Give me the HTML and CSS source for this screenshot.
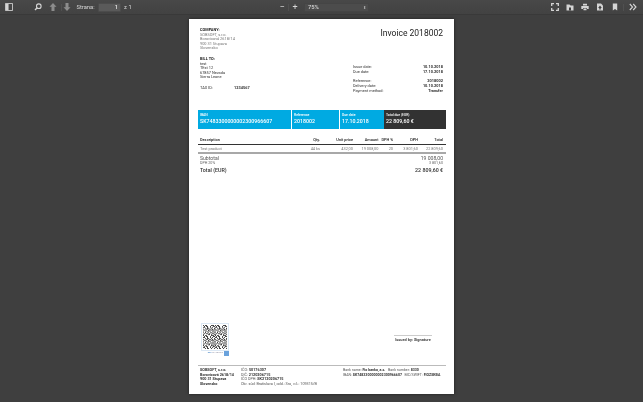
FILE: index.html
```html
<!DOCTYPE html>
<html lang="sk">
<head>
<meta charset="utf-8">
<title>Invoice 2018002</title>
<link rel="stylesheet" href="styles.css">
</head>
<body>
<header class="toolbar">
  <div class="tb-left">
    <svg class="ico sidebar" viewBox="0 0 9 9"><path fill="none" stroke="#d4d4d4" d="M.5.5h8v8h-8z"/><path fill="#d4d4d4" d="M1 1h3v7H1z"/></svg>
    <svg class="ico search" viewBox="0 0 8 8"><circle cx="4.800" cy="3.200" r="2.300" fill="none" stroke="#d4d4d4" stroke-width="1.100"/><path d="M3.200 4.800 1 7" stroke="#d4d4d4" stroke-width="1.400"/></svg>
    <svg class="ico up" viewBox="0 0 7 8"><path fill="#8c8c8c" d="M3.500 0 7 3.800H5V8H2V3.800H0z"/></svg>
    <span class="tb-sep"></span>
    <svg class="ico down" viewBox="0 0 7 8"><path fill="#8c8c8c" d="M3.500 8 7 4.200H5V0H2v4.200H0z"/></svg>
    <span class="tb-label">Strana:</span>
    <span class="tb-input">1</span>
    <span class="tb-of">z 1</span>
  </div>
  <div class="tb-center">
    <span class="zoom-btn">−</span>
    <span class="tb-sep zoom-sep"></span>
    <span class="zoom-btn">+</span>
    <span class="tb-select"><span>75%</span><span class="updown">⬍</span></span>
  </div>
  <div class="tb-right">
    <svg class="ico" viewBox="0 0 8 8"><path fill="none" stroke="#d4d4d4" stroke-width="1.300" d="M.7 3V.7H3M5 .7h2.300V3M7.300 5v2.300H5M3 7.300H.7V5"/></svg>
    <svg class="ico" viewBox="0 0 8 8"><path fill="#d4d4d4" d="M.5 1.500h3l1 1h3v5h-7z"/><path fill="#3d3d3d" d="M3 4.500h2v3H3z"/></svg>
    <svg class="ico" viewBox="0 0 8 8"><path fill="#d4d4d4" d="M2 .8h4v1.700H2zM.3 3h7.400v3H6V5H2v1H.3zM2.500 5.500h3v1.800h-3z"/></svg>
    <svg class="ico" viewBox="0 0 8 8"><path fill="#d4d4d4" d="M1 .5h4l2 2v5H1z"/><path fill="#3d3d3d" d="M4 2.500 5.800 5H4.700v1.500H3.300V5H2.200z"/></svg>
    <svg class="ico" viewBox="0 0 8 8"><path fill="#d4d4d4" d="M1.800.5h4.400v7L4 6 1.800 7.500z"/></svg>
    <span class="tb-sep right-sep"></span>
    <svg class="ico" viewBox="0 0 8 8"><path fill="none" stroke="#d4d4d4" stroke-width="1.100" d="M.8 1 3.600 4 .8 7M4.200 1 7 4 4.200 7"/></svg>
  </div>
</header>

<main class="viewer">
  <article class="page">
    <section class="head">
      <div class="company">
        <div class="strong">COMPANY:</div>
        <div class="muted">SOBSOFT, s.r.o.</div>
        <div class="muted">Borovicová 2618/14</div>
        <div class="muted">900 31 Stupava</div>
        <div class="muted">Slovensko</div>
      </div>
      <h1 class="title">Invoice 2018002</h1>
    </section>

    <section class="parties">
      <div class="bill">
        <div class="strong">BILL TO:</div>
        <div>test</div>
        <div>TEst 12</div>
        <div>67857 Nevada</div>
        <div>Sierra Leone</div>
        <div class="tax"><span class="tax-label">TAX ID:</span><b>1234567</b></div>
      </div>
      <div class="dates">
        <div class="kv"><span>Issue date:</span><b>10.10.2018</b></div>
        <div class="kv"><span>Due date:</span><b>17.10.2018</b></div>
        <div class="kv gap"><span>Reference:</span><b>2018002</b></div>
        <div class="kv"><span>Delivery date:</span><b>10.10.2018</b></div>
        <div class="kv"><span>Payment method:</span><b>Transfer</b></div>
      </div>
    </section>

    <section class="pay">
      <div class="cell c-iban"><small>IBAN</small><strong>SK7483300000002300966607</strong></div>
      <div class="cell c-ref"><small>Reference</small><strong>2018002</strong></div>
      <div class="cell c-due"><small>Due date</small><strong>17.10.2018</strong></div>
      <div class="cell c-total"><small>Total due (EUR)</small><strong>22 809,60 €</strong></div>
    </section>

    <section class="items">
      <div class="row row-head">
        <span class="desc">Description</span><span class="qty">Qty.</span><span class="unit">Unit price</span><span class="amt">Amount</span><span class="pct">DPH %</span><span class="dph">DPH</span><span class="tot">Total</span>
      </div>
      <div class="row row-item">
        <span class="desc">Test product</span><span class="qty">44 ks</span><span class="unit">432,00</span><span class="amt">19 008,00</span><span class="pct">20</span><span class="dph">3 801,60</span><span class="tot">22 809,60</span>
      </div>
    </section>

    <section class="sums">
      <div class="sum sum-sub"><span>Subtotal</span><span>19 008,00</span></div>
      <div class="sum sum-vat"><span>DPH 20%</span><span>3 801,60</span></div>
      <div class="sum sum-total"><span>Total (EUR)</span><span>22 809,60 €</span></div>
    </section>

    <section class="bottom">
      <div class="qr-wrap">
        <div class="qr">
          <svg viewBox="0 0 26 26" shape-rendering="crispEdges">
            <defs>
              <pattern id="qrt" width="13" height="11" patternUnits="userSpaceOnUse">
                <path fill="#444" d="M0 0h1v1H0zM2 0h2v1H2zM6 0h1v2H6zM9 0h3v1H9zM1 1h1v1H1zM3 1h2v1H3zM8 1h1v2H8zM11 1h2v1h-2zM0 2h2v1H0zM4 2h1v2H4zM10 2h1v1h-1zM2 3h1v1H2zM5 3h2v1H5zM9 3h1v1H9zM12 3h1v2h-1zM0 4h1v1H0zM3 4h2v1H3zM7 4h2v1H7zM10 4h1v1h-1zM1 5h2v1H1zM5 5h1v2H5zM9 5h3v1H9zM0 6h1v1H0zM3 6h1v1H3zM7 6h2v1H7zM12 6h1v1h-1zM2 7h1v2H2zM4 7h1v1H4zM6 7h1v1H6zM10 7h2v1h-2zM0 8h1v1H0zM5 8h1v1H5zM8 8h2v1H8zM12 8h1v1h-1zM1 9h1v1H1zM3 9h2v1H3zM7 9h1v2H7zM10 9h2v1h-2zM0 10h1v1H0zM5 10h2v1H5zM9 10h1v1H9zM12 10h1v1h-1z"/>
              </pattern>
            </defs>
            <rect width="26" height="26" fill="url(#qrt)"/>
          </svg>
        </div>
        <div class="qr-cap"><span class="qr-cap-text"><i>pay</i> by square</span><span class="qr-badge"></span></div>
      </div>
      <div class="sign"><span>Issued by: Signature</span></div>
    </section>

    <footer class="foot">
      <div class="f-col f-a">
        <b>SOBSOFT, s.r.o.</b><b>Borovicová 2618/14</b><b>900 31 Stupava</b><b>Slovensko</b>
      </div>
      <div class="f-col f-b">
        <div>IČO: <b>50176307</b></div>
        <div>DIČ: <b>2120206715</b></div>
        <div>IČO DPH: <b>SK2120206715</b></div>
        <div>Okr. súd: Bratislava I, odd.: Sro, v.č.: 109315/B</div>
      </div>
      <div class="f-col f-c">
        <div>Bank name: <b>Fio banka, a.s.</b> &nbsp; Bank number: <b>8330</b></div>
        <div>IBAN: <b>SK7483300000002300966607</b> &nbsp; BIC/SWIFT: <b>FIOZSKBA</b></div>
      </div>
    </footer>
  </article>
</main>
</body>
</html>
```
FILE: styles.css
```css
* { box-sizing: border-box; }
html, body { margin: 0; height: 100%; }
body {
  width: 643px;
  height: 402px;
  overflow: hidden;
  background: #3f3f3f;
  font-family: Roboto, "Liberation Sans", sans-serif;
  display: flex;
  flex-direction: column;
}

/* toolbar */
.toolbar {
  height: 15px;
  flex: none;
  display: grid;
  grid-template-columns: 1fr auto 1fr;
  align-items: center;
  background: linear-gradient(#484848, #424242);
  border-bottom: 1px solid #393939;
  color: #d8d8d8;
  font-size: 5.800px;
  padding: 0 5px;
  filter: blur(.35px);
}
.tb-left, .tb-center, .tb-right { display: flex; align-items: center; height: 14px; }
.ico { width: 8px; height: 8px; flex: none; }
.sidebar { margin-right: 21px; }
.search { margin-right: 7px; }
.up { margin-right: 3.500px; }
.down { margin-left: 1.500px; margin-right: 5.500px; }
.tb-sep { width: 1px; height: 7px; background: #505050; flex: none; }
.tb-label { margin-right: 3.500px; }
.tb-input {
  width: 23px; height: 9px; margin-right: 3px; padding: 0 2px;
  background: #5a5a5a; border: 1px solid #4c4c4c; border-radius: 1px;
  text-align: right; line-height: 7px; color: #e8e8e8; font-weight: 500;
}
.tb-center { width: 92px; margin-left: 3px; }
.zoom-btn { width: 10px; text-align: center; font-size: 9px; line-height: 9px; color: #d8d8d8; }
.zoom-sep { margin: 0 1px; }
.tb-select {
  width: 65px; height: 9px; margin-left: 4px; padding: 0 2px 0 3px;
  display: flex; justify-content: space-between; align-items: center;
  background: #4c4c4c; border: 1px solid #454545; border-radius: 1px;
  font-weight: 500;
}
.updown { font-size: 4px; color: #bbb; }
.tb-right { justify-content: flex-end; gap: 7px; padding-right: 1px; }
.right-sep { margin: 0 -2.300px; }

/* viewer */
.viewer { flex: 1; display: flex; justify-content: center; padding-top: 4px; }
.page {
  width: 265px;
  height: 375px;
  flex: none;
  background: #fff;
  color: #333;
  font-size: 3.900px;
  line-height: 4.600px;
  padding: 9px 8px 0 9px;
  display: flex;
  flex-direction: column;
  box-shadow: 0 0 3px rgba(0,0,0,.5);
  filter: blur(.3px);
}
.strong { font-weight: 700; color: #222; }
.muted { color: #777; }
b { font-weight: 700; }

.head { display: flex; justify-content: space-between; padding: 0 3px 0 2px; }
.title { margin: 0; font-weight: 400; font-size: 8.500px; line-height: 10px; color: #222; }

.parties { display: flex; justify-content: space-between; padding: 6px 3px 0 2px; height: 47px; }
.tax { margin-top: 6px; display: flex; }
.tax-label { width: 34px; }
.dates { width: 90px; padding-top: 7px; }
.kv { display: flex; justify-content: space-between; line-height: 5px; }
.gap { margin-top: 4px; }

.pay { display: flex; height: 19px; margin-top: 12px; gap: 1px; }
.cell { background: #00aae2; color: #fff; padding: 3.500px 2px 0 2px; display: flex; flex-direction: column; }
.cell small { font-size: 3.400px; line-height: 4px; font-weight: 500; }
.cell strong { font-size: 5.250px; line-height: 7px; font-weight: 500; margin-top: .5px; white-space: nowrap; }
.c-iban { width: 93px; }
.c-ref { width: 47px; }
.c-due { width: 44px; margin-right: -1px; }
.c-total { flex: 1; background: #323232; }

.items { margin-top: 8px; }
.row { display: flex; padding: 0 3px 0 2px; align-items: center; text-align: right; white-space: nowrap; }
.row .desc { width: 110px; text-align: left; }
.row .qty { width: 10px; }
.row .unit { width: 33px; }
.row .amt { width: 25.500px; }
.row .pct { width: 14.500px; }
.row .dph { width: 25px; }
.row .tot { width: 25px; }
.row-head { height: 6.500px; font-weight: 500; color: #222; border-bottom: 1px solid #333; box-sizing: content-box; padding-bottom: 1px; }
.row-item { height: 7px; color: #777; border-bottom: 2px solid #a8a8a8; box-sizing: content-box; }

.sums { padding: 2px 3px 0 2px; }
.sum { display: flex; justify-content: space-between; }
.sum-sub { font-size: 5.100px; line-height: 5px; color: #555; }
.sum-vat { font-size: 3.700px; line-height: 4px; color: #666; }
.sum-total { font-size: 5.300px; line-height: 6px; margin-top: 1.500px; font-weight: 500; color: #333; }

.bottom { flex: 1; display: flex; justify-content: space-between; padding: 150px 14px 0 3px; }
.qr-wrap { width: 28px; }
.qr { width: 28px; height: 28px; border: 1px solid #dce8f4; padding: 1px; background: #fff; }
.qr svg { display: block; width: 100%; height: 100%; }
.qr-cap { display: flex; justify-content: flex-end; align-items: flex-start; gap: 1px; height: 5px; }
.qr-cap-text { font-size: 2.500px; line-height: 4px; color: #99a; white-space: nowrap; }
.qr-cap-text i { color: #3a7cc0; font-style: normal; }
.qr-badge { width: 5px; height: 5px; background: #6aa2dc; flex: none; }
.sign { width: 38px; height: 10px; margin-top: 12px; border-top: 1px solid #ccc; text-align: center; font-weight: 700; color: #444; line-height: 4.800px; padding-top: 2px; white-space: nowrap; }
.sign span { display: block; }

.foot { border-top: 1.500px solid #bbb; height: 29px; padding: 2px 2px 0 2px; display: flex; font-size: 3.750px; line-height: 4.500px; color: #555; }
.f-col { display: flex; flex-direction: column; white-space: nowrap; }
.f-a { width: 41px; color: #333; }
.f-b { width: 102px; }
.f-b b, .f-c b { color: #333; }
.f-c { font-size: 3.550px; }
```
